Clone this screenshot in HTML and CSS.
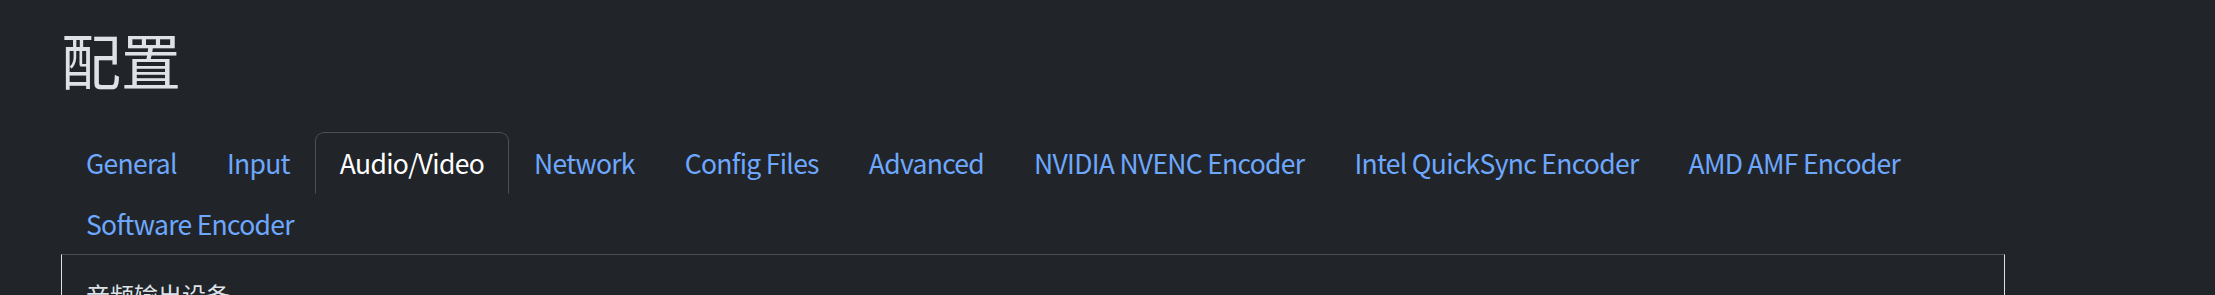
FILE: index.html
```html
<!DOCTYPE html>
<html lang="zh-CN">
<head>
<meta charset="utf-8">
<title>配置</title>
<link rel="stylesheet" href="styles.css">
</head>
<body>
<div class="page">
  <h1 class="title">配置</h1>
  <ul class="tabs">
    <li><a class="tab-link" href="#">General</a></li>
    <li><a class="tab-link" href="#">Input</a></li>
    <li><a class="tab-link active" href="#">Audio/Video</a></li>
    <li><a class="tab-link" href="#">Network</a></li>
    <li><a class="tab-link" href="#">Config Files</a></li>
    <li><a class="tab-link" href="#">Advanced</a></li>
    <li><a class="tab-link" href="#">NVIDIA NVENC Encoder</a></li>
    <li><a class="tab-link" href="#">Intel QuickSync Encoder</a></li>
    <li><a class="tab-link" href="#">AMD AMF Encoder</a></li>
    <li><a class="tab-link" href="#">Software Encoder</a></li>
  </ul>
  <div class="panel">
    <label class="field-label">音频输出设备</label>
  </div>
</div>
</body>
</html>
```
FILE: styles.css
```css
html, body {
  margin: 0;
  padding: 0;
  background: #212529;
}
body {
  color: #dee2e6;
  font-family: "Noto Sans CJK SC", "Noto Sans", sans-serif;
  overflow: hidden;
}
.page {
  width: 1944px;
  padding: 23px 0 0 61px;
}
.title {
  margin: 0 0 37px;
  font-size: 60px;
  font-weight: 400;
  line-height: 72px;
  color: #dee2e6;
}
.tabs {
  display: flex;
  flex-wrap: wrap;
  list-style: none;
  margin: 0;
  padding: 0;
}
.tab-link {
  display: block;
  padding: 12px 24px;
  margin-bottom: -1px;
  border: 1px solid transparent;
  border-radius: 9px 9px 0 0;
  font-size: 26.5px;
  letter-spacing: -0.7px;
  line-height: 36px;
  color: #6ea8fe;
  text-decoration: none;
}
.tab-link.active {
  color: #ffffff;
  border-color: #495057 #495057 #212529;
  background: #212529;
}
.panel {
  border-top: 1px solid #495057;
  border-left: 1px solid #dee2e6;
  border-right: 1px solid #dee2e6;
  padding: 22px 24px;
  height: 200px;
}
.field-label {
  display: block;
  font-size: 24px;
  line-height: 36px;
  color: #dee2e6;
}
```
